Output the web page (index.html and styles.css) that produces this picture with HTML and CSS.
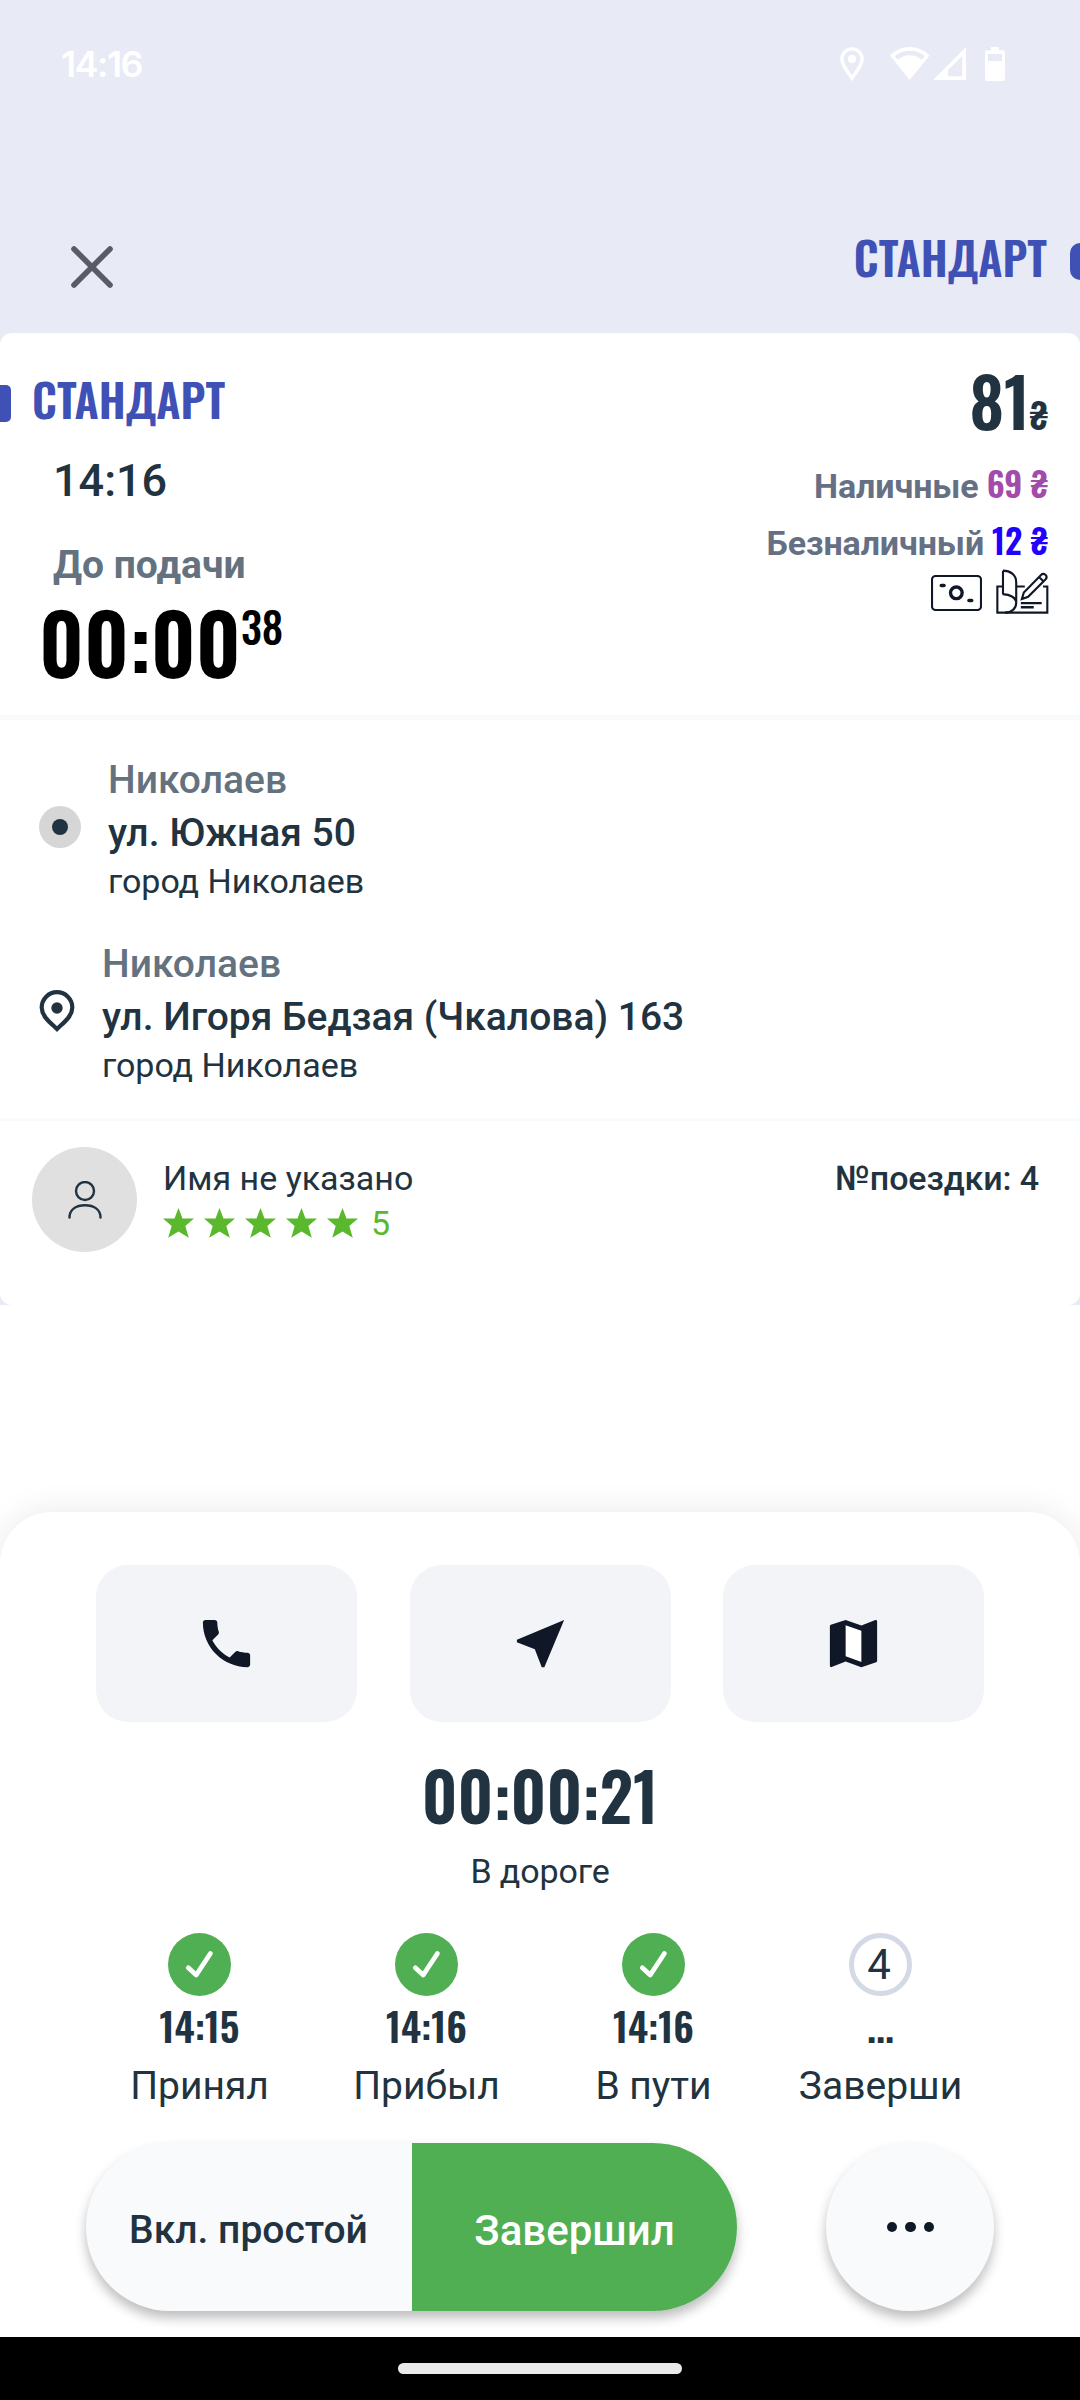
FILE: index.html
```html
<!DOCTYPE html>
<html lang="ru">
<head>
<meta charset="utf-8">
<title>Поездка</title>
<link rel="stylesheet" href="styles.css">
</head>
<body>
<div class="screen">
  <header class="top">
    <div class="status">
      <span class="status-time">14:16</span>
      <svg class="st-pin" width="24" height="34" viewBox="0 0 24 34"><path d="M12 31.2C8 25 1.9 18.500 1.900 12a10.100 10.100 0 0 1 20.200 0c0 6.500-6.100 13-10.100 19.200z" fill="none" stroke="#fff" stroke-width="3.400"/><circle cx="12" cy="12" r="4.300" fill="#fff"/></svg>
      <svg class="st-wifi" width="40" height="34" viewBox="0 0 40 34"><path fill="#fff" fill-rule="evenodd" d="M0 8.500C5.500 3 12.500 0 19.700 0S34 3 39.500 8.500L19.700 33zM4.800 9l3 3.800C11 10 15 8.200 19.700 8.200S28.500 10 31.700 12.800l3-3.800C30.500 5.500 25.500 3.800 19.700 3.800S9 5.500 4.800 9z"/></svg>
      <svg class="st-cell" width="33" height="33" viewBox="0 0 33 33"><path fill="#fff" fill-rule="evenodd" d="M33 0v33H0zM29.200 9L15 23v6.300h14.200z"/></svg>
      <svg class="st-bat" width="20" height="34" viewBox="0 0 20 34"><path fill="#fff" fill-rule="evenodd" d="M6 0h8v3.300h4a2 2 0 0 1 2 2V32a2 2 0 0 1-2 2H2a2 2 0 0 1-2-2V5.300a2 2 0 0 1 2-2h4zM3 7v7h14V7z"/></svg>
    </div>
    <div class="bar">
      <svg class="close" width="42" height="42" viewBox="0 0 42 42"><path d="M3 3l36 36M39 3L3 39" stroke="#595b66" stroke-width="5.600" stroke-linecap="round"/></svg>
      <span class="tariff">СТАНДАРТ</span>
      <i class="tag tag-end"></i>
    </div>
  </header>

  <div class="card-wrap">
    <main class="card">
      <section class="summary">
        <div class="sum-left">
          <div class="tariff-row"><i class="tag tag-start"></i><span class="tariff">СТАНДАРТ</span></div>
          <div class="order-time">14:16</div>
          <div class="until">До подачи</div>
          <div class="countdown"><span class="cd-main">00:00</span><span class="cd-sec">38</span></div>
        </div>
        <div class="sum-right">
          <div class="price"><span>81</span><span class="price-cur">₴</span></div>
          <div class="pay pay-cash"><span class="pay-label">Наличные</span><span class="pay-value cash">69 ₴</span></div>
          <div class="pay pay-card"><span class="pay-label">Безналичный</span><span class="pay-value card-pay">12 ₴</span></div>
          <div class="pay-icons">
            <svg class="ic-cash" width="51" height="36" viewBox="93 105 153 108" fill="none" stroke="#101828"><rect x="96" y="108" width="147" height="102" rx="11" stroke-width="6.400"/><circle cx="169" cy="158.500" r="17.500" stroke-width="10"/><path d="M124 136.500h8M207 181.500h8" stroke-width="11" stroke-linecap="round"/></svg>
            <svg width="53" height="45" viewBox="288 86 160 136" fill="none" stroke="#101828" stroke-width="6.400"><path d="M308 139H292v79h151v-79h-13M350 139h25"/><path d="M309 91v71M309 91c22 0 40 12 40 35v62M308 162c24 1 41 11 41 27s-14 29-34 29"/><path d="M366 177l6-20 52-53c5-5 9-4 14 0 4 5 4 9 0 13l-53 53zM418 110l13 13"/><path d="M363 189h63M363 201.500h39" stroke-width="7"/></svg>
          </div>
        </div>
      </section>

      <section class="route">
        <div class="stop">
          <div class="stop-icon"><svg width="42" height="42" viewBox="0 0 42 42"><circle cx="21" cy="21" r="21" fill="#d6d6d6"/><circle cx="21" cy="21" r="8" fill="#213340"/></svg></div>
          <div class="stop-text"><div class="area">Николаев</div><div class="street">ул. Южная 50</div><div class="city">город Николаев</div></div>
        </div>
        <div class="stop stop-to">
          <div class="stop-icon"><svg width="36" height="42" viewBox="0 0 36 42"><path d="M18 39C11.500 32.800 2.700 26.500 2.700 17.500a15.300 15.300 0 0 1 30.600 0C33.300 26.500 24.500 32.800 18 39z" fill="none" stroke="#213340" stroke-width="4.200"/><circle cx="18" cy="18" r="5.700" fill="#213340"/></svg></div>
          <div class="stop-text"><div class="area">Николаев</div><div class="street">ул. Игоря Бедзая (Чкалова) 163</div><div class="city">город Николаев</div></div>
        </div>
      </section>

      <section class="client">
        <div class="avatar"><svg width="34" height="38" viewBox="0 0 34 38" fill="none" stroke="#213340" stroke-width="2.400" stroke-linecap="round"><circle cx="17" cy="10" r="9"/><path d="M1.500 36.500C1.500 28.500 8 24.300 17 24.300s15.500 4.200 15.500 12.200"/></svg></div>
        <div class="client-info">
          <div class="client-name">Имя не указано</div>
          <div class="rating">
            <svg class="stars" width="195" height="30" viewBox="0 0 195 30" fill="#59b82b"><defs><path id="star" d="M15.500 0l4 10.500H31l-8.700 7.500 3.500 11.700-10.300-6.200-10.300 6.200L8.700 18 0 10.500h11.500z"/></defs><use href="#star"/><use href="#star" x="41"/><use href="#star" x="82"/><use href="#star" x="123"/><use href="#star" x="164"/></svg>
            <span>5</span>
          </div>
        </div>
        <div class="trip-no">№поездки: 4</div>
      </section>
    </main>
  </div>

  <section class="panel">
    <div class="tiles">
      <div class="tile"><svg width="63" height="63" viewBox="0 0 24 24"><path fill="#101828" d="M6.620 10.790c1.440 2.830 3.760 5.140 6.590 6.590l2.200-2.200c.27-.27.67-.36 1.020-.24 1.120.37 2.330.57 3.570.57.550 0 1 .45 1 1V20c0 .55-.45 1-1 1-9.390 0-17-7.610-17-17 0-.55.45-1 1-1h3.500c.55 0 1 .45 1 1 0 1.250.2 2.450.57 3.570.11.35.03.74-.25 1.020l-2.200 2.200z"/></svg></div>
      <div class="tile"><svg width="63" height="63" viewBox="0 0 24 24"><path fill="#101828" d="M21 3L3 10.530v.98l6.840 2.650L12.480 21h.98L21 3z"/></svg></div>
      <div class="tile"><svg width="63" height="63" viewBox="0 0 24 24"><path fill="#fff" d="M9 5l6 2.100V19l-6-2.110z"/><path fill="#101828" d="M20.500 3l-.16.030L15 5.100 9 3 3.360 4.900c-.21.070-.36.250-.36.480V20.500c0 .28.220.5.500.5l.16-.03L9 18.900l6 2.100 5.640-1.900c.21-.07.36-.25.36-.48V3.500c0-.28-.22-.5-.5-.5zM15 19l-6-2.110V5l6 2.110V19z"/></svg></div>
    </div>
    <div class="timer">00:00:21</div>
    <div class="timer-label">В дороге</div>
    <div class="steps">
      <div class="step"><div class="dot done"><svg width="63" height="63" viewBox="0 0 63 63"><path d="M20.300 34.800l7.900 7.200 14.200-21.500" class="tick"/></svg></div><div class="step-time">14:15</div><div class="step-name">Принял</div></div>
      <div class="step"><div class="dot done"><svg width="63" height="63" viewBox="0 0 63 63"><path d="M20.300 34.800l7.900 7.200 14.200-21.500" class="tick"/></svg></div><div class="step-time">14:16</div><div class="step-name">Прибыл</div></div>
      <div class="step"><div class="dot done"><svg width="63" height="63" viewBox="0 0 63 63"><path d="M20.300 34.800l7.900 7.200 14.200-21.500" class="tick"/></svg></div><div class="step-time">14:16</div><div class="step-name">В пути</div></div>
      <div class="step"><div class="dot next">4</div><div class="step-time">...</div><div class="step-name">Заверши</div></div>
    </div>
    <div class="actions">
      <div class="pill"><div class="btn wait">Вкл. простой</div><div class="btn finish">Завершил</div></div>
      <div class="more"><i></i><i></i><i></i></div>
    </div>
  </section>
  <footer class="nav"><i class="handle"></i></footer>
</div>
</body>
</html>
```
FILE: styles.css
```css
* { box-sizing: border-box; }
body { margin: 0; background: #fff; }
svg { display: block; flex: none; }
.screen {
  width: 1080px; height: 2400px; overflow: hidden;
  display: flex; flex-direction: column;
  font-family: Roboto, "Liberation Sans", sans-serif; color: #213340; background: #fff;
}

/* header */
.top { height: 333px; background: #e8eaf6; }
.status { display: flex; align-items: flex-start; height: 223px; padding: 42px 75px 0 61px; }
.status-time { font: 600 36px/44px Inter, sans-serif; letter-spacing: -1.600px; color: #fff; margin-right: auto; }
.status svg { margin-top: 5px; }
.st-wifi { margin-left: 26px; }
.st-cell { margin-left: 3px; }
.st-bat { margin-left: 19px; }
.bar { display: flex; align-items: flex-start; height: 110px; padding-left: 71px; }
.close { margin: 23px auto 0 0; }
.tariff { font: 600 45px/67px Oswald, Roboto, sans-serif; color: #3f51b5; }
.tag { flex: none; height: 37px; background: #3f51b5; }
.tag-end { width: 10px; margin: 20px 0 0 23px; border-radius: 10px 0 0 10px; }
.tag-start { width: 11px; margin: 20px 21px 0 0; border-radius: 0 5px 5px 0; }

/* order card */
.card-wrap { height: 972px; background: #e8eaf6; }
.card { height: 972px; background: #fff; border-radius: 12px; overflow: hidden; }
.summary { display: flex; justify-content: space-between; height: 387px; border-bottom: 5px solid #f9fafc; }
.sum-left { padding-top: 32px; }
.tariff-row { display: flex; align-items: flex-start; }
.order-time { margin: 22px 0 0 53px; font-size: 45px; line-height: 53px; font-weight: 500; }
.until { margin: 35px 0 0 53px; font-size: 39px; line-height: 46px; font-weight: 700; color: #647280; }
.countdown { display: flex; align-items: flex-start; margin: 0 0 0 39px; font-family: Oswald, Roboto, sans-serif; font-weight: 600; color: #000; }
.cd-main { font-size: 83px; line-height: 105px; }
.cd-sec { margin-top: 7px; font-size: 42px; line-height: 62px; font-weight: 500; }
.sum-right { display: flex; flex-direction: column; align-items: flex-end; padding: 17px 32px 0 0; }
.price { height: 99px; font: 600 67px/99px Oswald, Roboto, sans-serif; }
.price-cur { font-size: 36px; }
.pay { display: flex; align-items: baseline; gap: 8px; height: 51px; font-size: 34px; line-height: 51px; }
.pay-cash { margin-top: 8px; }
.pay-card { margin-top: 6px; }
.pay-label { font-weight: 700; color: #667085; letter-spacing: -.100px; }
.pay-value { font-family: Oswald, Roboto, sans-serif; font-weight: 600; }
.cash { color: #a34bab; }
.card-pay { color: #2200ff; }
.pay-icons { display: flex; align-items: flex-start; gap: 14px; margin: 4px -1px 0 0; }
.ic-cash { margin-top: 6px; }

/* route */
.route { height: 401px; padding-top: 37px; border-bottom: 3px solid #f9fafc; }
.stop { display: flex; align-items: center; gap: 27px; padding-left: 39px; }
.stop-to { margin-top: 40px; }
.stop-icon { padding-bottom: 4px; }
.area { font-size: 39px; line-height: 46px; font-weight: 500; color: #647280; }
.street { margin-top: 7px; font-size: 39px; line-height: 46px; font-weight: 500; }
.city { margin-top: 5px; font-size: 34px; line-height: 40px; }

/* passenger */
.client { display: flex; align-items: flex-start; padding: 26px 41px 0 32px; }
.avatar { display: flex; align-items: center; justify-content: center; width: 105px; height: 105px; border-radius: 50%; background: #e0e0e0; }
.client-info { margin: 11px auto 0 26px; font-size: 34px; line-height: 40px; }
.rating { display: flex; align-items: center; gap: 13px; margin-top: 5px; color: #59b82b; }
.trip-no { margin-top: 11px; font-size: 34px; line-height: 40px; font-weight: 500; letter-spacing: -.100px; }

/* bottom panel */
.panel {
  margin-top: 207px; height: 825px; padding: 53px 86px 0; background: #fff;
  border-radius: 52px 52px 0 0; box-shadow: 0 0 34px rgba(0, 0, 0, .09);
}
.tiles { display: flex; justify-content: space-between; padding: 0 10px; }
.tile { display: flex; align-items: center; justify-content: center; width: 261px; height: 157px; border-radius: 32px; background: #f3f4f8; }
.timer { margin-top: 23px; text-align: center; font: 600 66px/98px Oswald, Roboto, sans-serif; }
.timer-label { margin-top: 8px; text-align: center; font-size: 34px; line-height: 40px; letter-spacing: -.100px; }
.steps { display: grid; grid-template-columns: repeat(4, 1fr); margin-top: 42px; }
.step { display: flex; flex-direction: column; align-items: center; }
.dot { width: 63px; height: 63px; border-radius: 50%; }
.done { background: #4faf52; }
.tick { fill: none; stroke: #fff; stroke-width: 4.800px; stroke-linecap: round; stroke-linejoin: round; }
.next { border: 5.500px solid #d3dae6; padding-right: 3px; text-align: center; font-size: 42px; line-height: 54px; }
.step-time { font: 600 39px/58px Oswald, Roboto, sans-serif; }
.step-name { margin-top: 9px; font-size: 39px; line-height: 46px; }
.actions { display: flex; justify-content: space-between; margin-top: 34px; }
.pill, .more { height: 168px; background: #f9fafb; box-shadow: 0 7px 12px rgba(0, 0, 0, .26); }
.pill { display: flex; width: 651px; border-radius: 84px; overflow: hidden; }
.btn { display: flex; align-items: center; justify-content: center; font-weight: 500; padding-top: 6px; }
.wait { width: 326px; padding-right: 1px; font-size: 39px; }
.finish { width: 325px; background: #4faf52; color: #fff; font-size: 42px; }
.more { display: flex; align-items: center; justify-content: center; gap: 8px; width: 168px; padding-left: 1px; border-radius: 50%; }
.more i { width: 10.500px; height: 10.500px; border-radius: 50%; background: #101828; }

/* gesture bar */
.nav { display: flex; justify-content: center; height: 63px; padding-top: 26px; background: #000; }
.handle { width: 284px; height: 11px; border-radius: 6px; background: #eaeaea; }
```
